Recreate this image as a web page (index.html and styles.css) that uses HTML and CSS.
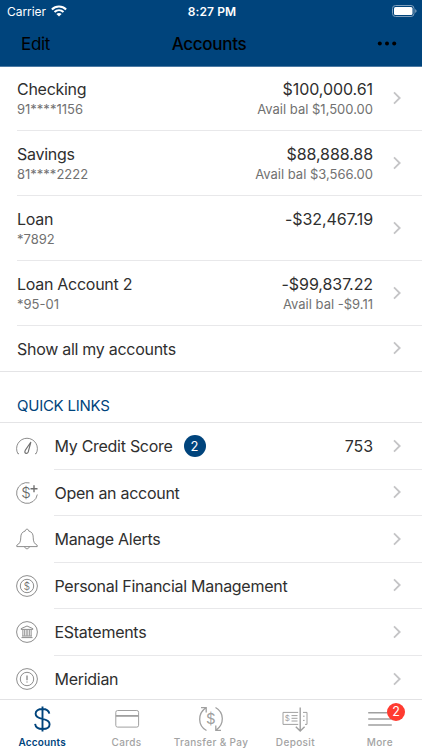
FILE: index.html
```html
<!DOCTYPE html>
<html lang="en">
<head>
    <meta charset="UTF-8">
    <meta name="viewport" content="width=device-width, initial-scale=1.0">
    <title>Accounts</title>
    <link rel="stylesheet" href="styles.css">
</head>
<body>
    <svg width="0" height="0" class="defs">
        <symbol id="chevron" viewBox="0 0 8 14">
            <path d="M1 1.4 L6.7 7 L1 12.6" fill="none" stroke="#c4c4c6" stroke-width="1.8"/>
        </symbol>
    </svg>
    <div class="app">
        <header class="header">
            <div class="status">
                <div class="carrier">
                    <span>Carrier</span>
                    <svg class="wifi" width="16" height="12" viewBox="0 0 16 12">
                        <g fill="none" stroke="#fff" stroke-width="2.1">
                            <path d="M0.9 4.4 C4.8 0.6 11.2 0.6 15.1 4.4"/>
                            <path d="M3.5 7.1 C6.1 4.7 9.9 4.7 12.5 7.1"/>
                        </g>
                        <path d="M5.4 8.9 C6.9 7.6 9.1 7.6 10.6 8.9 L8 11.6 Z" fill="#fff"/>
                    </svg>
                </div>
                <span class="time">8:27 PM</span>
                <svg class="battery" width="25" height="12" viewBox="0 0 25 12">
                    <rect x="0.5" y="0.5" width="21.5" height="11" rx="3" fill="none" stroke="#7f9fbc"/>
                    <rect x="2" y="2" width="18.5" height="8" rx="1.5" fill="#fff"/>
                    <path d="M23.2 4 Q24.6 4.8 24.6 6 Q24.6 7.2 23.2 8 Z" fill="#7f9fbc"/>
                </svg>
            </div>
            <div class="navbar">
                <span class="edit">Edit</span>
                <h1>Accounts</h1>
                <svg class="dots" width="20" height="6" viewBox="0 0 20 6">
                    <circle cx="2.8" cy="2.4" r="2"/>
                    <circle cx="10" cy="2.4" r="2"/>
                    <circle cx="17.2" cy="2.4" r="2"/>
                </svg>
            </div>
        </header>

        <main>
            <section class="accounts">
                <div class="account">
                    <div class="info"><div class="name">Checking</div><div class="sub">91****1156</div></div>
                    <div class="balance"><div class="name">$100,000.61</div><div class="sub">Avail bal $1,500.00</div></div>
                    <svg class="chevron"><use href="#chevron"/></svg>
                </div>
                <div class="account">
                    <div class="info"><div class="name">Savings</div><div class="sub">81****2222</div></div>
                    <div class="balance"><div class="name">$88,888.88</div><div class="sub">Avail bal $3,566.00</div></div>
                    <svg class="chevron"><use href="#chevron"/></svg>
                </div>
                <div class="account">
                    <div class="info"><div class="name">Loan</div><div class="sub">*7892</div></div>
                    <div class="balance"><div class="name">-$32,467.19</div></div>
                    <svg class="chevron"><use href="#chevron"/></svg>
                </div>
                <div class="account">
                    <div class="info"><div class="name">Loan Account 2</div><div class="sub">*95-01</div></div>
                    <div class="balance"><div class="name">-$99,837.22</div><div class="sub">Avail bal -$9.11</div></div>
                    <svg class="chevron"><use href="#chevron"/></svg>
                </div>
            </section>
            <div class="show-all">
                <span class="name">Show all my accounts</span>
                <svg class="chevron"><use href="#chevron"/></svg>
            </div>

            <h2>QUICK LINKS</h2>
            <section class="links">
                <div class="link">
                    <svg class="icon" viewBox="0 0 22 22">
                        <path d="M3 18.7 H1.9 A10.4 10.4 0 1 1 20.1 18.7 H19"/>
                        <path d="M14.9 7 L9.2 15.4 C7.9 18 10.8 19.8 12.2 17 Z" stroke-width="1.1"/>
                    </svg>
                    <div class="label"><span class="name">My Credit Score</span><span class="count">2</span><span class="name score">753</span>
                        <svg class="chevron"><use href="#chevron"/></svg></div>
                </div>
                <div class="link">
                    <svg class="icon" viewBox="0 0 22 22">
                        <path d="M13.5 0.9 A10.4 10.4 0 1 0 21.3 12.5"/>
                        <path d="M18 3.2 V10.2 M14.5 6.7 H21.5" stroke-width="1.4"/>
                        <text x="10" y="16.4" font-size="15">$</text>
                    </svg>
                    <div class="label"><span class="name">Open an account</span>
                        <svg class="chevron"><use href="#chevron"/></svg></div>
                </div>
                <div class="link">
                    <svg class="icon" viewBox="0 0 22 22">
                        <path d="M9.3 3 C9.3 0.6 12.7 0.6 12.7 3 C16 3.8 17.2 6.3 17.2 9.2 C17.2 13.8 18.4 15.8 21.2 17.2 V18.6 H0.8 V17.2 C3.6 15.8 4.8 13.8 4.8 9.2 C4.8 6.3 6 3.8 9.3 3 Z"/>
                        <path d="M8.8 18.8 C9 21.4 13 21.4 13.2 18.8"/>
                    </svg>
                    <div class="label"><span class="name">Manage Alerts</span>
                        <svg class="chevron"><use href="#chevron"/></svg></div>
                </div>
                <div class="link">
                    <svg class="icon" viewBox="0 0 22 22">
                        <circle cx="11" cy="11" r="10.4"/>
                        <circle cx="11" cy="11" r="6.7"/>
                        <text x="11" y="14.6" font-size="10">$</text>
                    </svg>
                    <div class="label"><span class="name">Personal Financial Management</span>
                        <svg class="chevron"><use href="#chevron"/></svg></div>
                </div>
                <div class="link">
                    <svg class="icon" viewBox="0 0 22 22">
                        <circle cx="11" cy="11" r="10.4"/>
                        <path d="M5.2 8.4 V7.6 L11 5 L16.8 7.6 V8.4 Z M5.5 16.6 H16.5 M6 15 H16"/>
                        <path d="M6.8 9 V14.6 M8.4 9 V14.6 M10.2 9 V14.6 M11.8 9 V14.6 M13.6 9 V14.6 M15.2 9 V14.6" stroke-width="0.7"/>
                    </svg>
                    <div class="label"><span class="name">EStatements</span>
                        <svg class="chevron"><use href="#chevron"/></svg></div>
                </div>
                <div class="link">
                    <svg class="icon" viewBox="0 0 22 22">
                        <circle cx="11" cy="11" r="10.4"/>
                        <circle cx="11" cy="11" r="6.7"/>
                        <path d="M11 7.4 V12.2 M11 13.4 V14.6" stroke-width="1.1"/>
                    </svg>
                    <div class="label"><span class="name">Meridian</span>
                        <svg class="chevron"><use href="#chevron"/></svg></div>
                </div>
            </section>
        </main>

        <nav class="tabs">
            <div class="tab active">
                <svg width="28" height="28" viewBox="0 0 28 28" stroke-width="1.9">
                    <path d="M21.3 8.7 C20.8 5.5 18.3 4 14.5 4 C10.3 4 7.6 5.8 7.6 8.8 C7.6 12 10.3 13 14.3 13.9 C18.8 14.8 21.6 16 21.6 19.2 C21.6 22.3 18.8 24 14.5 24 C10.3 24 7.6 22.3 7.1 18.8 M14.5 1.4 V26.6"/>
                </svg>
                <span>Accounts</span>
            </div>
            <div class="tab">
                <svg width="28" height="28" viewBox="0 0 28 28">
                    <rect x="2.8" y="5.5" width="22.8" height="16.6" rx="1.8"/>
                    <path d="M2.8 10.9 H25.6" stroke-width="1.8"/>
                </svg>
                <span>Cards</span>
            </div>
            <div class="tab">
                <svg width="28" height="28" viewBox="0 0 28 28" stroke-width="1.3">
                    <path d="M9.5 25.5 C0.5 20.5 0.5 8.5 9 2.8 M4 2.6 H9.2 V7.6"/>
                    <path d="M18.5 2.5 C27.5 7.5 27.5 19.5 19 25.2 M24 25.4 H18.8 V20.4"/>
                    <text x="14" y="19.2" font-size="15">$</text>
                </svg>
                <span>Transfer &amp; Pay</span>
            </div>
            <div class="tab">
                <svg width="28" height="28" viewBox="0 0 28 28">
                    <path d="M17.2 7.4 H2 V19.4 H17.2 M22 7.4 H26 V19.4 H24 M22 11.2 H23.6 M22 15.4 H23.6"/>
                    <path d="M10.5 10.6 H16.5 M10.5 13.3 H16.5 M10.5 16 H16.5"/>
                    <path d="M19.2 2.6 V26 M14.8 21.8 L19.2 26 L23.6 21.8" stroke-width="1.4"/>
                    <text x="6.6" y="16.2" font-size="8">$</text>
                </svg>
                <span>Deposit</span>
            </div>
            <div class="tab">
                <svg width="28" height="28" viewBox="0 0 28 28" stroke-width="1.5">
                    <path d="M2.2 7.7 H25.8 M2.2 13.9 H25.8 M2.2 20.1 H25.8"/>
                </svg>
                <span>More</span>
                <b class="badge">2</b>
            </div>
        </nav>
    </div>
</body>
</html>
```

FILE: styles.css
```css
* {
    box-sizing: border-box;
}
body {
    margin: 0;
    font-family: Inter, "Liberation Sans", sans-serif;
    background-color: #fff;
    color: #2f2f2f;
}
h1, h2 {
    margin: 0;
    font-weight: 400;
}
.defs {
    display: none;
}
.app {
    display: flex;
    flex-direction: column;
    width: 422px;
    height: 750px;
    overflow: hidden;
}
.header {
    height: 66.5px;
    background-color: #00447c;
    border-bottom: 1px solid #4c7aa3;
}
.status {
    display: grid;
    grid-template-columns: 1fr auto 1fr;
    align-items: center;
    height: 22px;
    padding: 0 5px 0 7px;
    color: #fff;
    font-size: 12px;
}
.carrier {
    display: flex;
    align-items: center;
    gap: 5px;
    letter-spacing: -0.05px;
}
.time {
    font-weight: 600;
    letter-spacing: 0.1px;
}
.battery {
    justify-self: end;
}
.navbar {
    display: grid;
    grid-template-columns: 1fr auto 1fr;
    align-items: center;
    height: 43px;
    padding: 0 25px 0 21px;
    color: #000;
    font-size: 17px;
    letter-spacing: -0.3px;
}
.navbar h1 {
    font-size: 17px;
    font-weight: 500;
}
.dots {
    justify-self: end;
}
.name {
    padding-top: 1px;
    font-size: 16px;
    line-height: 20px;
    letter-spacing: -0.28px;
}
.balance .name {
    letter-spacing: -0.08px;
}
.sub {
    color: #717171;
    font-size: 13px;
    line-height: 20px;
}
.chevron {
    flex: none;
    width: 8px;
    height: 14px;
}
.account {
    display: flex;
    align-items: center;
    height: 64.8px;
    margin-left: 17px;
    padding-right: 21px;
    border-bottom: 1px solid #e8e8ea;
}
.info {
    flex: 1;
    height: 40px;
}
.balance {
    height: 40px;
    margin-right: 20px;
    text-align: right;
}
.show-all {
    display: flex;
    align-items: center;
    justify-content: space-between;
    height: 46.5px;
    padding: 0 21px 0 17px;
    border-bottom: 1px solid #e4e4e6;
}
h2 {
    height: 51px;
    padding: 24px 17px 0;
    border-bottom: 1px solid #e4e4e6;
    color: #00447c;
    font-size: 15px;
    line-height: 20px;
    letter-spacing: -0.25px;
}
.link {
    display: flex;
    align-items: center;
    height: 46.5px;
    padding-left: 16.3px;
}
.icon {
    flex: none;
    width: 22px;
    height: 22px;
    margin-right: 16.2px;
    fill: none;
    stroke: #707070;
    stroke-width: 0.8;
}
svg text {
    fill: #666;
    stroke: none;
    font-weight: 300;
    text-anchor: middle;
}
.label {
    display: flex;
    flex: 1;
    align-items: center;
    height: 100%;
    padding-right: 21px;
    border-bottom: 1px solid #e8e8ea;
}
.link:last-child .label {
    border-bottom: none;
}
.label .chevron {
    margin-left: auto;
}
.count {
    width: 22px;
    height: 22px;
    margin-left: 11px;
    border-radius: 50%;
    background-color: #00447c;
    color: #fff;
    font-size: 13px;
    line-height: 22px;
    text-align: center;
}
.score {
    margin-left: auto;
    letter-spacing: -0.1px;
}
.label .score + .chevron {
    margin-left: 20px;
}
main {
    flex: 1;
    min-height: 0;
    overflow: hidden;
}
.tabs {
    display: grid;
    grid-template-columns: repeat(5, 1fr);
    height: 51px;
    border-top: 1px solid #e2e2e4;
    background-color: #fff;
}
.tab {
    display: flex;
    position: relative;
    flex-direction: column;
    align-items: center;
    padding-top: 5px;
    color: #a3a3a3;
    font-size: 10px;
    font-weight: 500;
    line-height: 14px;
    letter-spacing: 0.35px;
}
.tab span {
    margin-top: 2px;
}
.tab svg {
    fill: none;
    stroke: #a0a0a0;
}
.tab svg text {
    fill: #a0a0a0;
    font-weight: 400;
}
.tab.active {
    color: #00447c;
    font-weight: 600;
    letter-spacing: 0.15px;
}
.tab.active svg {
    stroke: #00447c;
}
.badge {
    position: absolute;
    top: 3px;
    right: 17px;
    width: 18px;
    height: 18px;
    border-radius: 50%;
    background-color: #ff3b30;
    color: #fff;
    font-size: 12.5px;
    font-weight: 400;
    line-height: 18px;
    text-align: center;
    letter-spacing: 0;
}
```
